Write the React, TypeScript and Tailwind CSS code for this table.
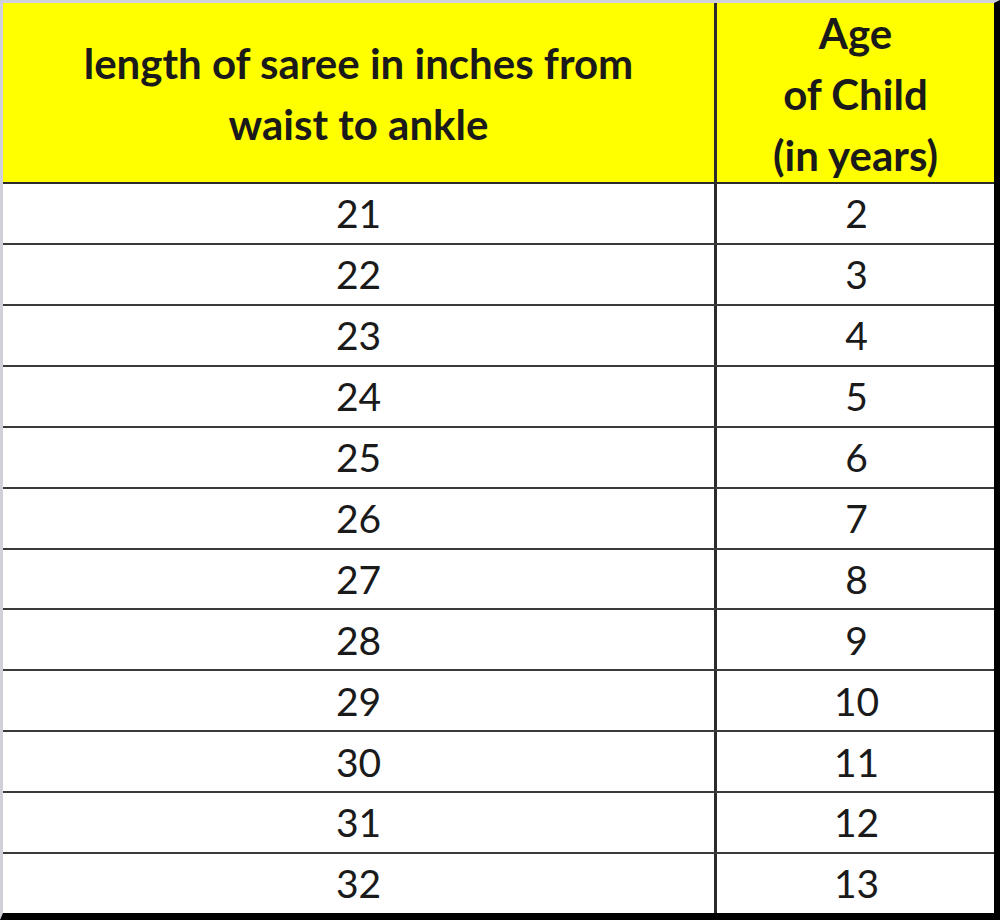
import React from 'react';

const rows: [number, number][] = [
  [21, 2], [22, 3], [23, 4], [24, 5], [25, 6], [26, 7],
  [27, 8], [28, 9], [29, 10], [30, 11], [31, 12], [32, 13],
];

const SareeSizeChart: React.FC = () => {
  return (
    <div
      className="w-[1000px] h-[920px] bg-white border-l-[3px] border-t-[3px] border-l-[#cfd0d8] border-t-[#cfd0d8] border-r-[6px] border-r-black border-b-[7px] border-b-black flex flex-col text-[#1a1a1a]"
      style={{ fontFamily: 'Lato, "Open Sans", sans-serif' }}
    >
      {/* header */}
      <div className="flex h-[181px] bg-[#ffff00] border-b-[2px] border-[#2b2b2b] font-bold text-[42px] leading-[61px]">
        <div className="w-[714px] flex items-center justify-center text-center border-r-[3px] border-[#2b2b2b] pt-[2px]">
          <span>length of saree in inches from<br />waist to ankle</span>
        </div>
        <div className="flex-1 flex items-center justify-center text-center pt-[4px]">
          <span>Age<br />of Child<br />(in years)</span>
        </div>
      </div>

      {/* body */}
      <div className="flex flex-col flex-1">
        {rows.map(([length, age], i) => (
          <div
            key={length}
            className={`flex flex-1 text-[39px] ${i < rows.length - 1 ? 'border-b-[2px] border-[#3a3a3a]' : ''}`}
          >
            <div className="w-[714px] flex items-center justify-center border-r-[3px] border-[#2b2b2b]">
              {length}
            </div>
            <div className="flex-1 flex items-center justify-center pl-[2px]">{age}</div>
          </div>
        ))}
      </div>
    </div>
  );
};

export default function App() {
  return <SareeSizeChart />;
}
